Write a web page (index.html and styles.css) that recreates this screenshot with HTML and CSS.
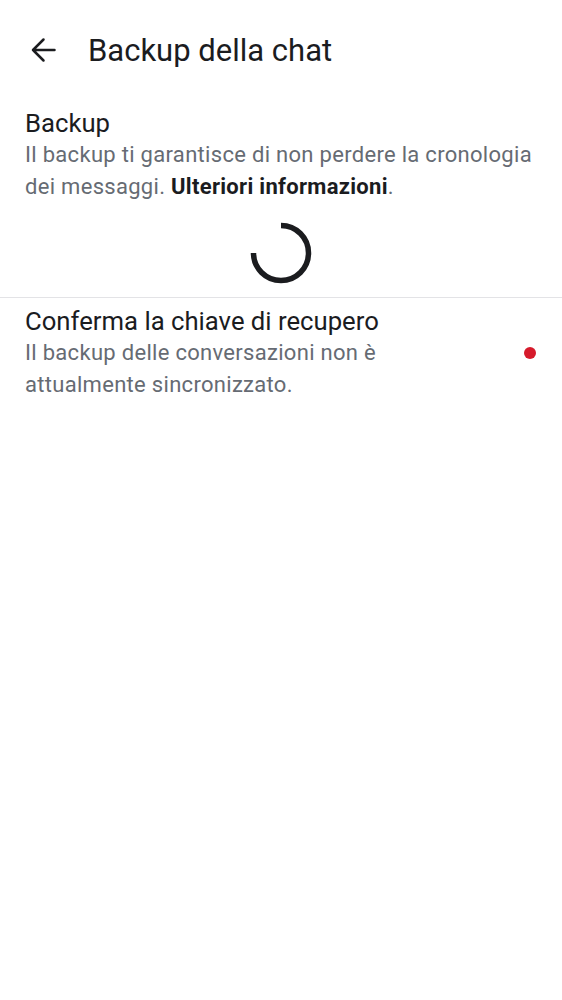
FILE: index.html
```html
<!DOCTYPE html>
<html lang="it">
<head>
<meta charset="utf-8">
<link rel="stylesheet" href="styles.css">
</head>
<body>
<div class="screen">
  <header class="toolbar">
    <button class="back" aria-label="Indietro">
      <svg width="26" height="26" viewBox="0 0 26 26"><path d="M24.5 13H3M13.5 2.5L3 13l10.5 10.5" fill="none" stroke="#1b1c1f" stroke-width="2.5" stroke-linecap="round" stroke-linejoin="round"/></svg>
    </button>
    <h1 class="title">Backup della chat</h1>
  </header>

  <section class="item">
    <div class="item-text">
      <div class="item-title">Backup</div>
      <div class="item-sub">Il backup ti garantisce di non perdere la cronologia dei messaggi. <b>Ulteriori informazioni</b>.</div>
    </div>
  </section>

  <div class="spinner-wrap">
    <svg class="spinner" width="64" height="64" viewBox="0 0 64 64">
      <path d="M32 4.5 A27.5 27.5 0 1 1 4.5 32" fill="none" stroke="#1b1c1f" stroke-width="5.5"/>
    </svg>
  </div>

  <div class="divider"></div>

  <section class="item row">
    <div class="item-text">
      <div class="item-title">Conferma la chiave di recupero</div>
      <div class="item-sub">Il backup delle conversazioni non è<br>attualmente sincronizzato.</div>
    </div>
    <span class="dot"></span>
  </section>
</div>
</body>
</html>
```

FILE: styles.css
```css
html, body {
  margin: 0;
  padding: 0;
  background: #ffffff;
}
body {
  font-family: Roboto, "Noto Sans", sans-serif;
  color: #1b1c1f;
}
.screen {
  width: 562px;
  min-height: 1000px;
}
.toolbar {
  display: flex;
  align-items: center;
  height: 100px;
  padding-left: 30px;
  gap: 32px;
}
.back {
  border: 0;
  background: none;
  padding: 0;
  width: 26px;
  height: 26px;
  display: flex;
}
.title {
  margin: 0;
  font-size: 31px;
  font-weight: 400;
  letter-spacing: 0;
}
.item {
  padding: 7px 25px 0 25px;
}
.item-title {
  font-size: 25.7px;
  line-height: 32px;
  color: #1b1c1f;
}
.item-sub {
  font-size: 22px;
  line-height: 32px;
  color: #666b73;
  letter-spacing: 0.3px;
}
.item-sub b {
  color: #1b1c1f;
  font-weight: 700;
}
.spinner-wrap {
  display: flex;
  justify-content: center;
  padding: 18px 0 12px;
}
.divider {
  height: 1px;
  background: #e3e3e6;
}
.row {
  display: flex;
  align-items: center;
  justify-content: space-between;
  padding-top: 7px;
  padding-right: 26px;
}
.dot {
  width: 12px;
  height: 12px;
  border-radius: 50%;
  background: #d61a2b;
}
```
